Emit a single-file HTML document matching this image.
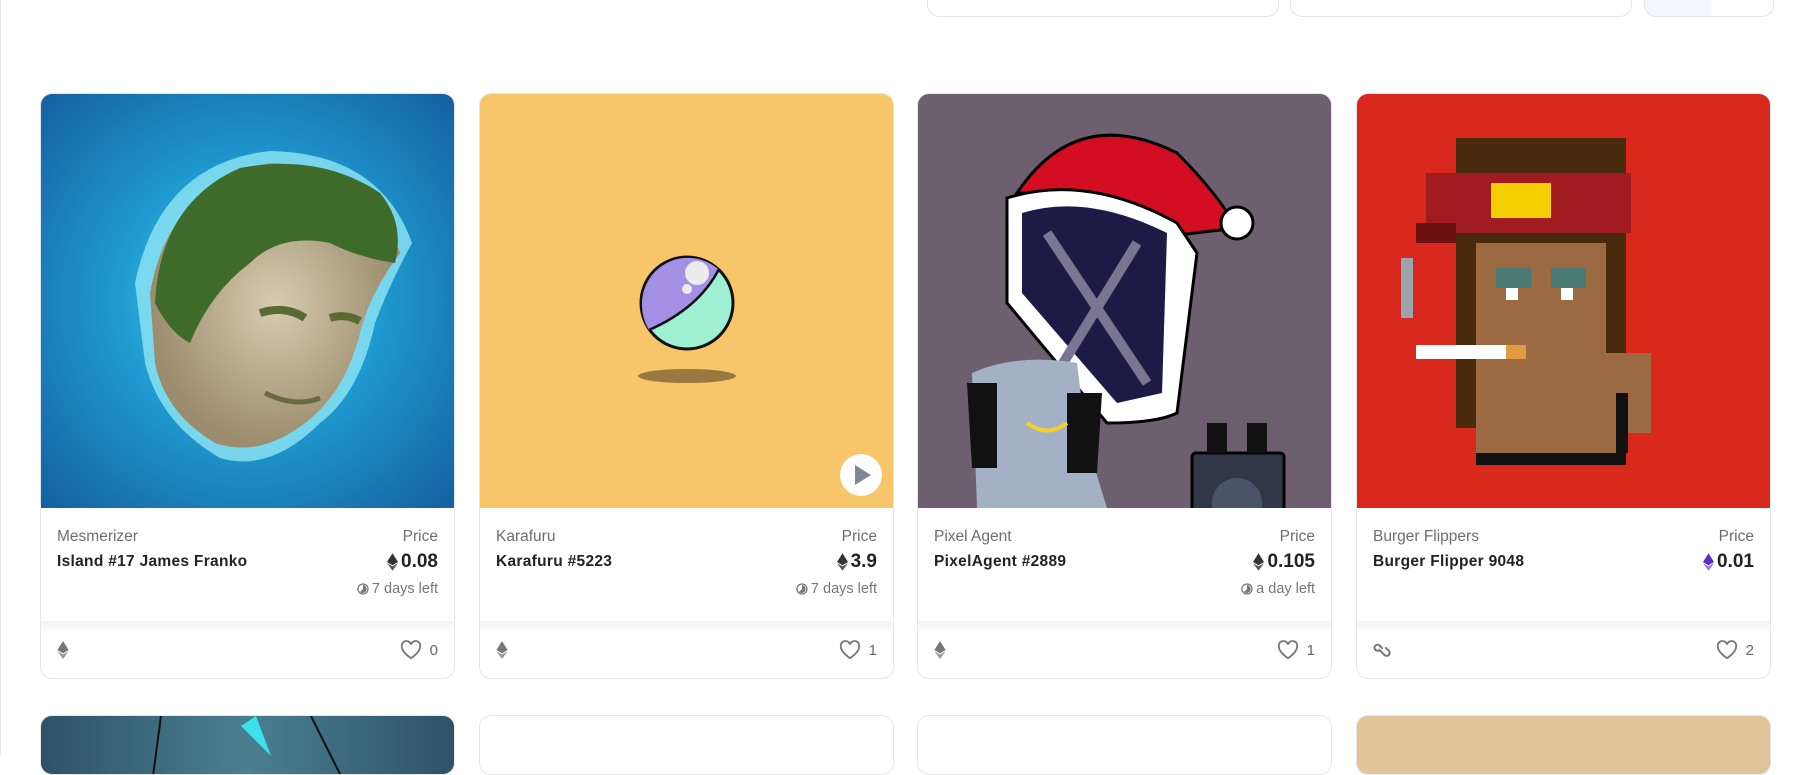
<!DOCTYPE html>
<html><head><meta charset="utf-8"><style>
*{margin:0;padding:0;box-sizing:border-box}
body{width:1805px;height:755px;overflow:hidden;background:#fff;font-family:"Liberation Sans",sans-serif;position:relative}
.vl{position:absolute;left:0;top:0;width:1px;height:755px;background:#e6e8eb}
.tb{position:absolute;top:-20px;height:37px;border:1px solid #e3e5e8;border-radius:12px;background:#fff}
.card{position:absolute;top:93px;width:415px;height:586px;border:1px solid #e6e6e6;border-radius:12px;overflow:hidden;background:#fff}
.img{position:absolute;left:-1px;top:-1px;width:415px;height:415px;overflow:hidden}
.info{position:absolute;top:422px;left:16px;right:16px}
.col{position:absolute;top:12px;font-size:15.5px;color:#6e6e6e}
.name{position:absolute;top:37px;left:0;font-size:15.5px;font-weight:bold;color:#222;letter-spacing:.3px}
.price{position:absolute;right:0;top:35px;font-size:19px;font-weight:bold;color:#222;display:flex;align-items:center;gap:3px}
.left{position:absolute;right:0;top:65px;font-size:14.5px;color:#777;display:flex;align-items:center;gap:3px}
.foot{position:absolute;left:0;right:0;top:527px;height:58px;background:linear-gradient(#f4f4f4,#fff 14px)}
.fi{position:absolute;left:16px;top:20px}
.lk{position:absolute;right:16px;top:19px;display:flex;align-items:center;gap:8px;font-size:15px;color:#666}
.card2{position:absolute;top:715px;width:415px;height:60px;border:1px solid #e6e6e6;border-radius:12px;overflow:hidden;background:#fff}
</style></head><body>
<div class="vl"></div>
<div class="tb" style="left:927px;width:352px;"></div>
<div class="tb" style="left:1290px;width:342px;"></div>
<div class="tb" style="left:1644px;width:130px;background:linear-gradient(90deg,#f1f7fb 0 52%,#fff 52%)"></div>

<!-- card 1 -->
<div class="card" style="left:40px">
<div class="img"><svg width="415" height="415" viewBox="0 0 415 415">
<defs><radialGradient id="sea" cx="50%" cy="50%" r="70%"><stop offset="0" stop-color="#4ed0ee"/><stop offset=".45" stop-color="#1f9ad0"/><stop offset="1" stop-color="#1560a0"/></radialGradient>
<radialGradient id="face" cx="50%" cy="50%" r="50%"><stop offset="0" stop-color="#d8cbb0"/><stop offset="1" stop-color="#9a8c6c"/></radialGradient></defs>
<rect width="415" height="415" fill="url(#sea)"/>
<path d="M95 190 Q120 70 230 58 Q340 60 372 150 Q350 190 335 230 Q320 300 280 330 Q230 380 180 365 Q120 330 105 270 Z" fill="#8fe6f4" opacity=".8"/>
<path d="M110 200 Q130 90 230 70 Q330 75 360 160 Q330 200 320 240 Q305 300 265 330 Q220 365 175 350 Q125 320 115 270 Z" fill="url(#face)"/>
<path d="M115 210 Q120 110 200 75 Q280 60 340 100 Q365 130 355 170 Q320 165 290 150 Q240 140 210 170 Q170 200 150 250 Q130 240 115 210 Z" fill="#3e6a2a"/>
<path d="M220 220 q25 -8 45 5 M290 225 q15 -5 30 3" stroke="#5a6a35" stroke-width="8" fill="none"/>
<path d="M225 300 q30 15 55 5" stroke="#6a6a40" stroke-width="5" fill="none"/>
</svg></div>
<div class="info"><div class="col">Mesmerizer</div><div class="col" style="right:0">Price</div>
<div class="name">Island #17 James Franko</div>
<div class="price"><svg width="11" height="18" viewBox="0 0 10 16"><path d="M5 0L0 8l5 3 5-3z" fill="#333"/><path d="M5 12L0 9l5 7 5-7z" fill="#555"/></svg>0.08</div>
<div class="left"><svg width="12" height="12"><circle cx="6" cy="6" r="5" stroke="#777" stroke-width="1.3" fill="none"/><path d="M6 6V2A4 4 0 1 1 3 9z" fill="#777"/></svg>7 days left</div></div>
<div class="foot"><svg class="fi" width="12" height="18" viewBox="0 0 10 16"><path d="M5 0L0 8l5 3 5-3z" fill="#777"/><path d="M5 12L0 9l5 7 5-7z" fill="#999"/></svg>
<div class="lk"><svg width="22" height="20" viewBox="0 0 24 22"><path d="M12 20S2 13.5 2 7.5A5 5 0 0 1 12 5a5 5 0 0 1 10 2.5C22 13.5 12 20 12 20z" stroke="#777" stroke-width="2" fill="none"/></svg>0</div></div>
</div>

<!-- card 2 -->
<div class="card" style="left:479px">
<div class="img" style="background:#f7c66a"><svg width="415" height="415">
<ellipse cx="208" cy="283" rx="49" ry="7" fill="#8a6a3a" opacity=".85"/>
<circle cx="208" cy="210" r="46" fill="#9ff0d2" stroke="#111" stroke-width="3"/>
<path d="M163 213 A46 46 0 0 1 239 176 Q220 215 170 237 Q163 225 163 213z" fill="#a390e4"/>
<path d="M170 237 Q220 215 240 176" stroke="#111" stroke-width="2.5" fill="none"/>
<circle cx="218" cy="180" r="12" fill="#ececec"/><circle cx="208" cy="196" r="5" fill="#ececec"/>
<circle cx="382" cy="382" r="21" fill="#fff"/><path d="M376 372v20l16-10z" fill="#7e8895"/>
</svg></div>
<div class="info"><div class="col">Karafuru</div><div class="col" style="right:0">Price</div>
<div class="name">Karafuru #5223</div>
<div class="price"><svg width="11" height="18" viewBox="0 0 10 16"><path d="M5 0L0 8l5 3 5-3z" fill="#333"/><path d="M5 12L0 9l5 7 5-7z" fill="#555"/></svg>3.9</div>
<div class="left"><svg width="12" height="12"><circle cx="6" cy="6" r="5" stroke="#777" stroke-width="1.3" fill="none"/><path d="M6 6V2A4 4 0 1 1 3 9z" fill="#777"/></svg>7 days left</div></div>
<div class="foot"><svg class="fi" width="12" height="18" viewBox="0 0 10 16"><path d="M5 0L0 8l5 3 5-3z" fill="#777"/><path d="M5 12L0 9l5 7 5-7z" fill="#999"/></svg>
<div class="lk"><svg width="22" height="20" viewBox="0 0 24 22"><path d="M12 20S2 13.5 2 7.5A5 5 0 0 1 12 5a5 5 0 0 1 10 2.5C22 13.5 12 20 12 20z" stroke="#777" stroke-width="2" fill="none"/></svg>1</div></div>
</div>

<!-- card 3 -->
<div class="card" style="left:917px">
<div class="img" style="background:#6e5f70"><svg width="415" height="415">
<path d="M100 100 Q160 10 260 60 Q300 100 320 135 L235 145 Q180 100 100 100z" fill="#d40e22" stroke="#000" stroke-width="3"/>
<circle cx="320" cy="130" r="16" fill="#fff" stroke="#000" stroke-width="3"/>
<path d="M90 105 Q170 80 260 130 L280 160 L260 320 Q240 330 190 330 L90 210 Z" fill="#fff" stroke="#000" stroke-width="3"/>
<path d="M105 120 Q170 100 250 140 L245 300 L200 310 L105 200 Z" fill="#1d1a45"/>
<path d="M130 140 L230 290 M220 150 L140 280" stroke="#7a7590" stroke-width="10"/>
<path d="M55 280 Q100 260 160 270 L170 350 L190 415 L60 415 Z" fill="#a3b0c6"/>
<path d="M50 290 L80 290 L80 375 L55 375Z" fill="#111"/><path d="M150 300 L185 300 L180 380 L150 380Z" fill="#111"/>
<path d="M110 330 Q130 345 150 330" stroke="#f5d02a" stroke-width="4" fill="none"/>
<rect x="275" y="360" width="92" height="90" rx="4" fill="#303848" stroke="#000" stroke-width="3"/>
<circle cx="320" cy="410" r="25" fill="#4a5468"/>
<rect x="290" y="330" width="20" height="30" fill="#111"/><rect x="330" y="330" width="20" height="30" fill="#111"/>
</svg></div>
<div class="info"><div class="col">Pixel Agent</div><div class="col" style="right:0">Price</div>
<div class="name">PixelAgent #2889</div>
<div class="price"><svg width="11" height="18" viewBox="0 0 10 16"><path d="M5 0L0 8l5 3 5-3z" fill="#333"/><path d="M5 12L0 9l5 7 5-7z" fill="#555"/></svg>0.105</div>
<div class="left"><svg width="12" height="12"><circle cx="6" cy="6" r="5" stroke="#777" stroke-width="1.3" fill="none"/><path d="M6 6V2A4 4 0 1 1 3 9z" fill="#777"/></svg>a day left</div></div>
<div class="foot"><svg class="fi" width="12" height="18" viewBox="0 0 10 16"><path d="M5 0L0 8l5 3 5-3z" fill="#777"/><path d="M5 12L0 9l5 7 5-7z" fill="#999"/></svg>
<div class="lk"><svg width="22" height="20" viewBox="0 0 24 22"><path d="M12 20S2 13.5 2 7.5A5 5 0 0 1 12 5a5 5 0 0 1 10 2.5C22 13.5 12 20 12 20z" stroke="#777" stroke-width="2" fill="none"/></svg>1</div></div>
</div>

<!-- card 4 -->
<div class="card" style="left:1356px">
<div class="img" style="background:#d9291d"><svg width="415" height="415" shape-rendering="crispEdges">
<rect x="100" y="45" width="170" height="290" fill="#4a2a0c"/>
<rect x="70" y="80" width="205" height="60" fill="#a01c20"/><rect x="60" y="130" width="40" height="20" fill="#6a1010"/>
<rect x="135" y="90" width="60" height="35" fill="#f5d000"/>
<rect x="120" y="150" width="130" height="185" fill="#9c6a42"/>
<rect x="140" y="175" width="35" height="20" fill="#4a7a74"/><rect x="195" y="175" width="35" height="20" fill="#4a7a74"/>
<rect x="150" y="195" width="12" height="12" fill="#fff"/><rect x="205" y="195" width="12" height="12" fill="#fff"/>
<rect x="60" y="252" width="90" height="14" fill="#fff"/><rect x="150" y="252" width="20" height="14" fill="#e39a40"/>
<rect x="45" y="165" width="12" height="60" fill="#9aa5b0"/>
<rect x="120" y="335" width="150" height="30" fill="#9c6a42"/><rect x="235" y="260" width="60" height="80" fill="#9c6a42"/>
<rect x="120" y="360" width="150" height="12" fill="#111"/><rect x="260" y="300" width="12" height="60" fill="#111"/>
</svg></div>
<div class="info"><div class="col">Burger Flippers</div><div class="col" style="right:0">Price</div>
<div class="name">Burger Flipper 9048</div>
<div class="price"><svg width="11" height="18" viewBox="0 0 10 16"><path d="M5 0L0 8l5 3 5-3z" fill="#5b2ec4"/><path d="M5 12L0 9l5 7 5-7z" fill="#9b6ef0"/></svg>0.01</div></div>
<div class="foot"><svg class="fi" width="22" height="18" viewBox="0 0 22 18" style="top:20px"><path d="M9 7L6.5 4.5a3 3 0 1 0 0 4.5L9 11.5l2.5 2.5a3 3 0 1 0 4.3-4.3L13 7" stroke="#777" stroke-width="2" fill="none" stroke-linecap="round"/></svg>
<div class="lk"><svg width="22" height="20" viewBox="0 0 24 22"><path d="M12 20S2 13.5 2 7.5A5 5 0 0 1 12 5a5 5 0 0 1 10 2.5C22 13.5 12 20 12 20z" stroke="#777" stroke-width="2" fill="none"/></svg>2</div></div>
</div>

<div class="card2" style="left:40px;background:linear-gradient(90deg,#2e5268,#4a7f90 50%,#2e5268)"><svg width="415" height="60"><path d="M120 0 L112 60 M270 0 L300 60" stroke="#111" stroke-width="2"/><path d="M200 10 L215 0 L230 40 Z" fill="#3ce0e8"/></svg></div>
<div class="card2" style="left:479px"></div>
<div class="card2" style="left:917px"></div>
<div class="card2" style="left:1356px;background:#e0c49a"></div>
</body></html>
